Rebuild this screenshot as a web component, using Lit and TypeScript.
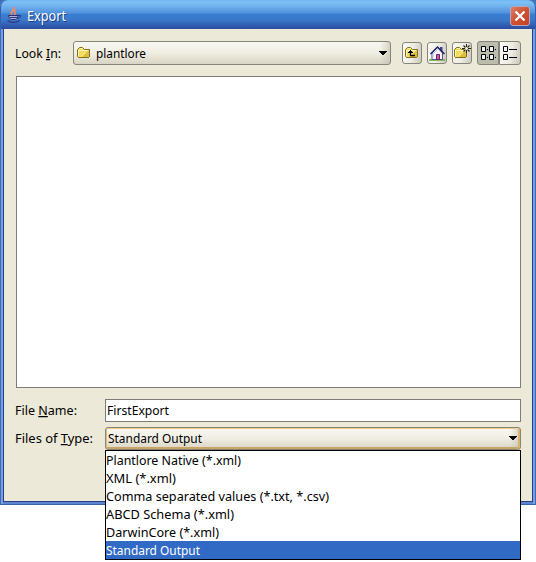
import { LitElement, html, css, svg } from "lit";
import { customElement } from "lit/decorators.js";

const TYPES: [string, number][] = [
  ["Plantlore Native (*.xml)", 135],
  ["XML (*.xml)", 70],
  ["Comma separated values (*.txt, *.csv)", 223],
  ["ABCD Schema (*.xml)", 128],
  ["DarwinCore (*.xml)", 113],
  ["Standard Output", 94],
];

const folder = svg`
  <path d="M.5 4.500 L2.500 2.500 H5.500 L7.500 4.500 H12.500 V11.500 L11.500 12.500 H1.500 L.5 11.500Z" fill="#f3d95c" stroke="#80701c"/>
  <path d="M1.500 11 V5.500 H11.500" fill="none" stroke="#fff8b8"/>
  <path d="M3 3.500 H6" stroke="#fff3a0"/>
  <path d="M12 5 V12 H5Z" fill="#d8b437" opacity=".8"/>
  <path d="M4 11.500 L10 5.500" stroke="#fff2a0" fill="none"/>
  <path d="M12.500 4.500 V11.500 L11.500 12.500 H1.500" stroke="#80701c" fill="none"/>`;

const glyphs: Record<string, unknown> = {
  up: svg`<g transform="translate(1 0)">${folder}
    <path d="M5.500 6 V10.500 H10" fill="none" stroke="#000" stroke-width="1.300"/>
    <path d="M3 7.500 H8 M4 6.500 H7 M5 5.500 H6" stroke="#000"/></g>`,
  home: svg`
    <path d="M0 15 H16" stroke="#7dbb55" stroke-width="2"/>
    <path d="M3 14.500 V8 L8.500 2.500 L13.500 8 V14.500Z" fill="#f7f9ff" stroke="#4b4f9c"/>
    <path d="M11 2 H13.500 V7 L11 4.500Z" fill="#3f438f"/>
    <path d="M4 13 V9 L8.500 4.500" fill="none" stroke="#b9c6ec"/>
    <path d="M1.500 9 L8.500 2 L15.500 9" fill="none" stroke="#20245f" stroke-width="1.500"/>
    <path d="M7.500 14.500 V9.500 H10.500 V14.500Z" fill="#d958a0" stroke="#6a2465"/>`,
  create: svg`${folder}
    <path d="M10 1 H15 V6 H10Z" fill="#f6eeb8"/>
    <path d="M12.500 -1 V2 M12.500 5 V8 M8 3.500 H11 M14 3.500 H17" stroke="#222"/>
    <path d="M9.500 .5 L11.500 2.500 M13.500 4.500 L15.500 6.500 M15.500 .5 L13.500 2.500 M11.500 4.500 L9.500 6.500" stroke="#222" stroke-width="1.100"/>`,
  grid: svg`<g fill="#edf4fb" stroke="#000">
    <path d="M1.500 1.500 H5.500 V6.500 H1.500Z M9.500 1.500 H13.500 V6.500 H9.500Z M1.500 9.500 H5.500 V14.500 H1.500Z M9.500 9.500 H13.500 V14.500 H9.500Z"/></g>
    <path d="M7 4.500 H8 M15 4.500 H16 M7 12.500 H8 M15 12.500 H16" stroke="#000"/>`,
  list: svg`<g fill="#edf4fb" stroke="#000">
    <path d="M1.500 1.500 H5.500 V6.500 H1.500Z M1.500 9.500 H5.500 V14.500 H1.500Z"/></g>
    <path d="M7 4.500 H15 M7 12.500 H15" stroke="#000"/>`,
};

@customElement("app-root")
export class AppRoot extends LitElement {
  static styles = css`
    :host { display: block; width: 536px; height: 562px; position: relative; overflow: hidden; background: #fff;
      font: 12.5px/18px "Noto Sans", "DejaVu Sans", sans-serif; color: #000; }
    * { box-sizing: border-box; }
    svg { display: block; overflow: visible; flex: none; }
    .window { height: 505px; padding: 0 4px 4px; border-radius: 7px 7px 0 0; background: #ece9d8;
      display: flex; flex-direction: column;
      box-shadow: inset 1px 0 #3c6cae, inset -1px 0 #3c6cae, inset 0 -1px #3663a3,
        inset 3px 0 #769fe9, inset -3px 0 #769fe9, inset 0 -3px #5c86d4,
        inset 4px 0 #263f82, inset -4px 0 #263f82, inset 0 -4px #263f82; }
    .back { background: #426fb9; height: 505px; width: 536px; }
    .title { height: 29px; margin: 0 -4px; padding: 1px 6px 0 7px; flex: none; display: flex; align-items: center;
      border-radius: 7px 7px 0 0;
      background: linear-gradient(#70b6f2 0, #7dc0f4 2px, #71b3ee 6px, #5e9fe4 10px, #5093dd 13px, #397ed0 14px, #3a78ca 20px, #315eb3 25px, #2c4ba0 29px);
      box-shadow: inset 1px 0 #345eb0, inset -1px 0 #345eb0; }
    .caption { color: #fff; font-size: 13.5px; margin: 2px 0 0 4px; flex: 1; text-shadow: 1px 1px #1b3c83; }
    .close { width: 20px; height: 20px; border: 1px solid #b9a4b8; border-radius: 3px; margin-top: 1px;
      background: linear-gradient(135deg, #dc8068, #cf5032 50%, #c24329); display: grid; place-items: center; }
    .body { flex: 1; padding: 12px 11px 0; }
    .top { display: flex; height: 24px; align-items: center; }
    .label { flex: none; width: 90px; }
    .combo { border: 1px solid #85857c; border-radius: 3px; display: flex; align-items: center;
      background: linear-gradient(90deg, transparent 0, transparent calc(100% - 10px), #c4c2b5aa),
        linear-gradient(#f8f7f1, #f0eee3 50%, #e2dfd1 80%, #d8d4c5); }
    .look { width: 318px; height: 24px; padding: 0 3px; }
    .look-label { width: 58px; }
    .name { flex: 1; margin-left: 6px; }
    .tool { width: 20px; height: 22px; border: 1px solid #85857c; border-radius: 3px; margin-right: 5px;
      background: linear-gradient(100deg, #faf9f5, #eeece2 55%, #c9c7bc); display: flex; align-items: center; padding-left: 1px; }
    .first { margin-left: 11px; }
    .view { width: 22px; height: 24px; margin: 0; padding-left: 2px; }
    .view.on { background: #bdbdad; border-radius: 3px 0 0 3px; }
    .view.off { border-radius: 0 3px 3px 0; }
    .files { height: 312px; margin: 11px 0 0 1px; border: 1px solid #7c7c78; background: #fff; }
    .row { display: flex; height: 23px; margin-top: 11px; }
    .row.kind { margin-top: 5px; }
    .row .label { padding-top: 2px; }
    .field { flex: 1; height: 23px; background: #fff; border: 1px solid #7c7c78; padding: 1px; }
    .kindbox { flex: 1; height: 23px; padding: 0 3px 0 2px; box-shadow: inset 0 1px #f2ca80, inset 1px 0 #e5ba70, inset -2px 0 #dab46d, inset 0 -2px #c8a465; }
    .kindbox .name { margin: 0; }
    .kindbox > * { margin-bottom: 1px; }
    .kindbox .name { margin-bottom: 2px; }
    .popup { position: absolute; left: 105px; top: 450px; width: 416px; height: 110px; border: 1px solid #000; background: #fff; }
    .item { height: 18px; }
    .item.chosen { background: #316ac5; color: #fff; }
    .fit { height: 18px; fill: currentColor; }
  `;

  private text(s: string, width: number, mnemonic = -1) {
    return html`<svg class="fit" width=${width} height="18"><text y="14" textLength=${width} lengthAdjust="spacingAndGlyphs">${
      mnemonic < 0 ? s : svg`${s.slice(0, mnemonic)}<tspan text-decoration="underline">${s[mnemonic]}</tspan>${s.slice(mnemonic + 1)}`
    }</text></svg>`;
  }

  private icon(name: string) {
    return html`<svg width="16" height="16" viewBox="0 0 16 16">${glyphs[name]}</svg>`;
  }

  private arrow() {
    return html`<svg width="8" height="4" shape-rendering="crispEdges"><path d="M0 0H8V1H7V2H6V3H5V4H3V3H2V2H1V1H0Z"/></svg>`;
  }

  render() {
    return html`
      <div class="back"><div class="window">
        <div class="title">
          <svg width="16" height="16" viewBox="0 0 16 16" fill="none">
            <path d="M7.500 0 C7.500 3 2.500 4 5 8 M8.500 3 C5.500 5 9.500 5.500 7.500 8" stroke="#ee8a6a" stroke-width="1.900"/>
            <path d="M1.500 8.500 C2 11 3 12.500 4.500 12.500 H8.500 C10 12.500 10.500 11 11 8.500Z" fill="#aab4dc" stroke="#2b2f74"/>
            <path d="M11 8.500 H13.500 V10 L11 11.500 M3 10.500 H10" stroke="#33367c"/>
            <path d="M.5 13.500 C4 16 9 16 12.500 13.500" stroke="#33367c" stroke-width="1.300"/>
          </svg>
          <div class="caption">${this.text("Export", 39)}</div>
          <div class="close"><svg width="12" height="12"><path d="M1.500 1.500 L10.500 10.500 M10.500 1.500 L1.500 10.500" stroke="#fff" stroke-width="2.200"/></svg></div>
        </div>
        <div class="body">
          <div class="top">
            <div class="label look-label">${this.text("Look In:", 46, 5)}</div>
            <div class="combo look">
              <svg width="13" height="16">${folder}</svg>
              <div class="name">${this.text("plantlore", 50)}</div>
              ${this.arrow()}
            </div>
            <div class="tool first">${this.icon("up")}</div>
            <div class="tool">${this.icon("home")}</div>
            <div class="tool">${this.icon("create")}</div>
            <div class="tool view on">${this.icon("grid")}</div>
            <div class="tool view off">${this.icon("list")}</div>
          </div>
          <div class="files"></div>
          <div class="row"><div class="label">${this.text("File Name:", 62, 5)}</div>
            <div class="field">${this.text("FirstExport", 62)}</div></div>
          <div class="row kind"><div class="label">${this.text("Files of Type:", 78, 9)}</div>
            <div class="combo kindbox"><div class="name">${this.text("Standard Output", 94)}</div>${this.arrow()}</div></div>
        </div>
      </div></div>
      <div class="popup">${TYPES.map(([label, w]) => html`<div class="item ${label === "Standard Output" ? "chosen" : ""}">${this.text(label, w)}</div>`)}</div>
    `;
  }
}
